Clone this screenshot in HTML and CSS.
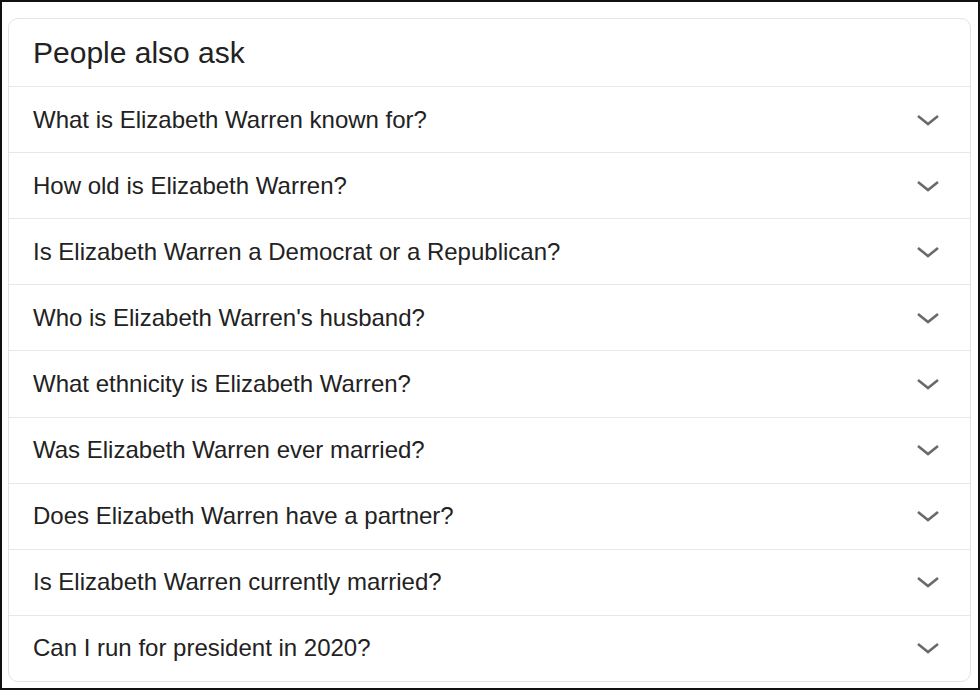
FILE: index.html
```html
<!DOCTYPE html>
<html lang="en">
<head>
    <meta charset="UTF-8">
    <meta name="viewport" content="width=device-width, initial-scale=1.0">
    <title>People also ask</title>
    <link rel="stylesheet" href="styles.css">
</head>
<body>
    <div class="frame">
        <!-- Fragen-Box -->
        <div class="card">
            <div class="card-title">People also ask</div>
            <div class="row"><span>What is Elizabeth Warren known for?</span><svg class="chevron" viewBox="0 0 24 12"><path d="M2 2 L12 10 L22 2"/></svg></div>
            <div class="row"><span>How old is Elizabeth Warren?</span><svg class="chevron" viewBox="0 0 24 12"><path d="M2 2 L12 10 L22 2"/></svg></div>
            <div class="row"><span>Is Elizabeth Warren a Democrat or a Republican?</span><svg class="chevron" viewBox="0 0 24 12"><path d="M2 2 L12 10 L22 2"/></svg></div>
            <div class="row"><span>Who is Elizabeth Warren's husband?</span><svg class="chevron" viewBox="0 0 24 12"><path d="M2 2 L12 10 L22 2"/></svg></div>
            <div class="row"><span>What ethnicity is Elizabeth Warren?</span><svg class="chevron" viewBox="0 0 24 12"><path d="M2 2 L12 10 L22 2"/></svg></div>
            <div class="row"><span>Was Elizabeth Warren ever married?</span><svg class="chevron" viewBox="0 0 24 12"><path d="M2 2 L12 10 L22 2"/></svg></div>
            <div class="row"><span>Does Elizabeth Warren have a partner?</span><svg class="chevron" viewBox="0 0 24 12"><path d="M2 2 L12 10 L22 2"/></svg></div>
            <div class="row"><span>Is Elizabeth Warren currently married?</span><svg class="chevron" viewBox="0 0 24 12"><path d="M2 2 L12 10 L22 2"/></svg></div>
            <div class="row"><span>Can I run for president in 2020?</span><svg class="chevron" viewBox="0 0 24 12"><path d="M2 2 L12 10 L22 2"/></svg></div>
        </div>
    </div>
</body>
</html>
```

FILE: styles.css
```css
/* Allgemeines Styling */
body {
    margin: 0;
    padding: 0;
    background-color: #fff;
    font-family: 'Liberation Sans', Arial, sans-serif;
    color: #222;
}

/* Schwarzer Rahmen */
.frame {
    box-sizing: border-box;
    width: 980px;
    height: 690px;
    border: 2px solid #111;
    padding: 16px 7px 6px 6px;
    display: flex;
    flex-direction: column;
}

/* Karte */
.card {
    flex: 1;
    display: flex;
    flex-direction: column;
    border: 1px solid #e4e4e4;
    border-radius: 10px;
    background: #fff;
}

.card-title {
    height: 67px;
    flex: none;
    display: flex;
    align-items: center;
    padding-left: 24px;
    font-size: 30px;
    color: #222;
}

.row {
    flex: 1;
    display: flex;
    align-items: center;
    justify-content: space-between;
    padding: 0 30px 0 24px;
    border-top: 1px solid #e8e8e8;
    font-size: 24px;
    color: #222;
}

.chevron {
    width: 24px;
    height: 12px;
    fill: none;
    stroke: #6a6a6a;
    stroke-width: 2.6;
}
```
